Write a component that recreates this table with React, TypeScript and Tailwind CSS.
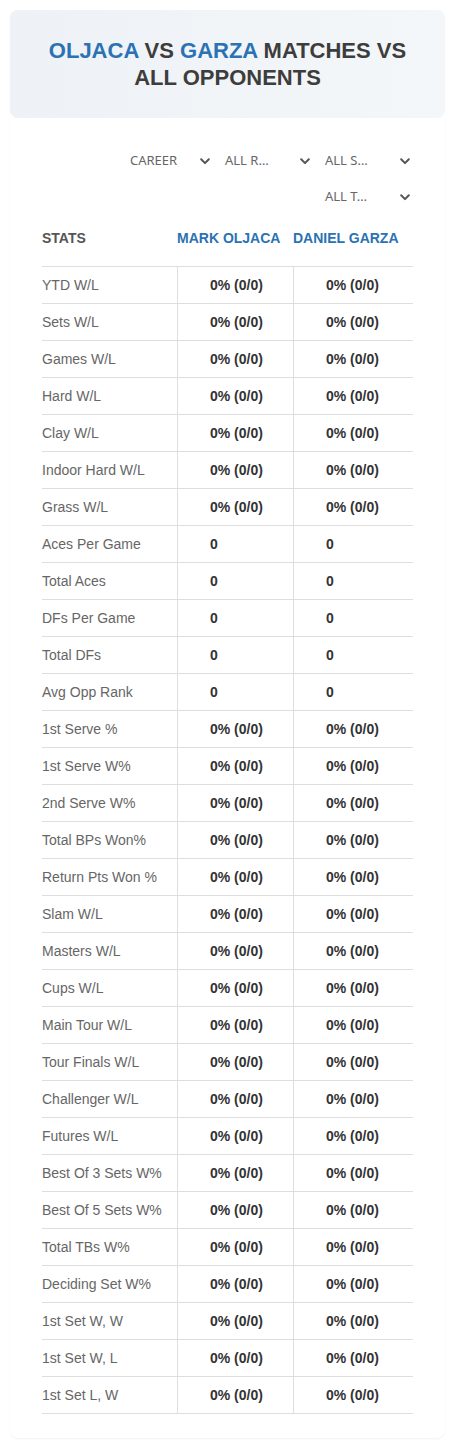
import React from "react";

type StatRow = {
  label: string;
  a: string;
  b: string;
};

const pct = "0% (0/0)";

const rows: StatRow[] = [
  { label: "YTD W/L", a: pct, b: pct },
  { label: "Sets W/L", a: pct, b: pct },
  { label: "Games W/L", a: pct, b: pct },
  { label: "Hard W/L", a: pct, b: pct },
  { label: "Clay W/L", a: pct, b: pct },
  { label: "Indoor Hard W/L", a: pct, b: pct },
  { label: "Grass W/L", a: pct, b: pct },
  { label: "Aces Per Game", a: "0", b: "0" },
  { label: "Total Aces", a: "0", b: "0" },
  { label: "DFs Per Game", a: "0", b: "0" },
  { label: "Total DFs", a: "0", b: "0" },
  { label: "Avg Opp Rank", a: "0", b: "0" },
  { label: "1st Serve %", a: pct, b: pct },
  { label: "1st Serve W%", a: pct, b: pct },
  { label: "2nd Serve W%", a: pct, b: pct },
  { label: "Total BPs Won%", a: pct, b: pct },
  { label: "Return Pts Won %", a: pct, b: pct },
  { label: "Slam W/L", a: pct, b: pct },
  { label: "Masters W/L", a: pct, b: pct },
  { label: "Cups W/L", a: pct, b: pct },
  { label: "Main Tour W/L", a: pct, b: pct },
  { label: "Tour Finals W/L", a: pct, b: pct },
  { label: "Challenger W/L", a: pct, b: pct },
  { label: "Futures W/L", a: pct, b: pct },
  { label: "Best Of 3 Sets W%", a: pct, b: pct },
  { label: "Best Of 5 Sets W%", a: pct, b: pct },
  { label: "Total TBs W%", a: pct, b: pct },
  { label: "Deciding Set W%", a: pct, b: pct },
  { label: "1st Set W, W", a: pct, b: pct },
  { label: "1st Set W, L", a: pct, b: pct },
  { label: "1st Set L, W", a: pct, b: pct },
];

const filters = ["CAREER", "ALL R…", "ALL S…", "ALL T…"];

function Chevron() {
  return (
    <svg width="10" height="7" viewBox="0 0 10 7" fill="none">
      <path d="M1.2 1.3 5 5.1 8.8 1.3" stroke="#555" strokeWidth="2" strokeLinecap="round" strokeLinejoin="round" />
    </svg>
  );
}

function FilterSelect({ label, first }: { label: string; first?: boolean }) {
  return (
    <div
      className={
        first
          ? "w-[100px] h-[36px] flex items-center justify-between pl-[10px] pr-[10px] text-[13px] text-[#666] [font-family:'Noto_Sans',sans-serif]"
          : "w-[100px] h-[36px] flex items-center justify-between pl-[5px] pr-[10px] text-[13px] text-[#666] [font-family:'Noto_Sans',sans-serif]"
      }
    >
      <span>{label}</span>
      <Chevron />
    </div>
  );
}

export default function App() {
  return (
    <div className="bg-white p-[10px] [font-family:'Liberation_Sans',Arial,sans-serif]">
      <div className="rounded-lg bg-white shadow-[0_1px_2px_rgba(0,0,0,0.05)] pb-[24px]">
        <div className="h-[108px] rounded-lg bg-gradient-to-r from-[#eef1f5] to-[#f4f7fa] flex items-center justify-center px-[30px]">
          <h1 className="text-center text-[22px] leading-[27px] font-bold text-[#3d3d3d]">
            <span className="text-[#2a72b3]">OLJACA</span> VS <span className="text-[#2a72b3]">GARZA</span> MATCHES VS ALL OPPONENTS
          </h1>
        </div>

        <div className="px-[32px]">
          <div className="flex flex-wrap justify-end -mr-[7px] mt-[25px]">
            {filters.map((f, i) => (
              <FilterSelect key={f} label={f} first={i === 0} />
            ))}
          </div>

          <div className="text-[14px]">
            <div className="flex h-[52px] pb-[4px] items-center border-b border-[#dedede] font-bold">
              <div className="w-[135px] text-[#555]">STATS</div>
              <div className="w-[116px] text-[#2a72b3]">MARK OLJACA</div>
              <div className="flex-1 text-[#2a72b3]">DANIEL GARZA</div>
            </div>
            {rows.map((r) => (
              <div key={r.label} className="flex h-[37px] border-b border-[#dedede]">
                <div className="w-[135px] flex items-center text-[#666]">{r.label}</div>
                <div className="w-[116px] flex items-center border-l border-[#dedede] pl-[32px] font-bold text-[#333]">{r.a}</div>
                <div className="flex-1 flex items-center border-l border-[#dedede] pl-[32px] font-bold text-[#333]">{r.b}</div>
              </div>
            ))}
          </div>
        </div>
      </div>
    </div>
  );
}
